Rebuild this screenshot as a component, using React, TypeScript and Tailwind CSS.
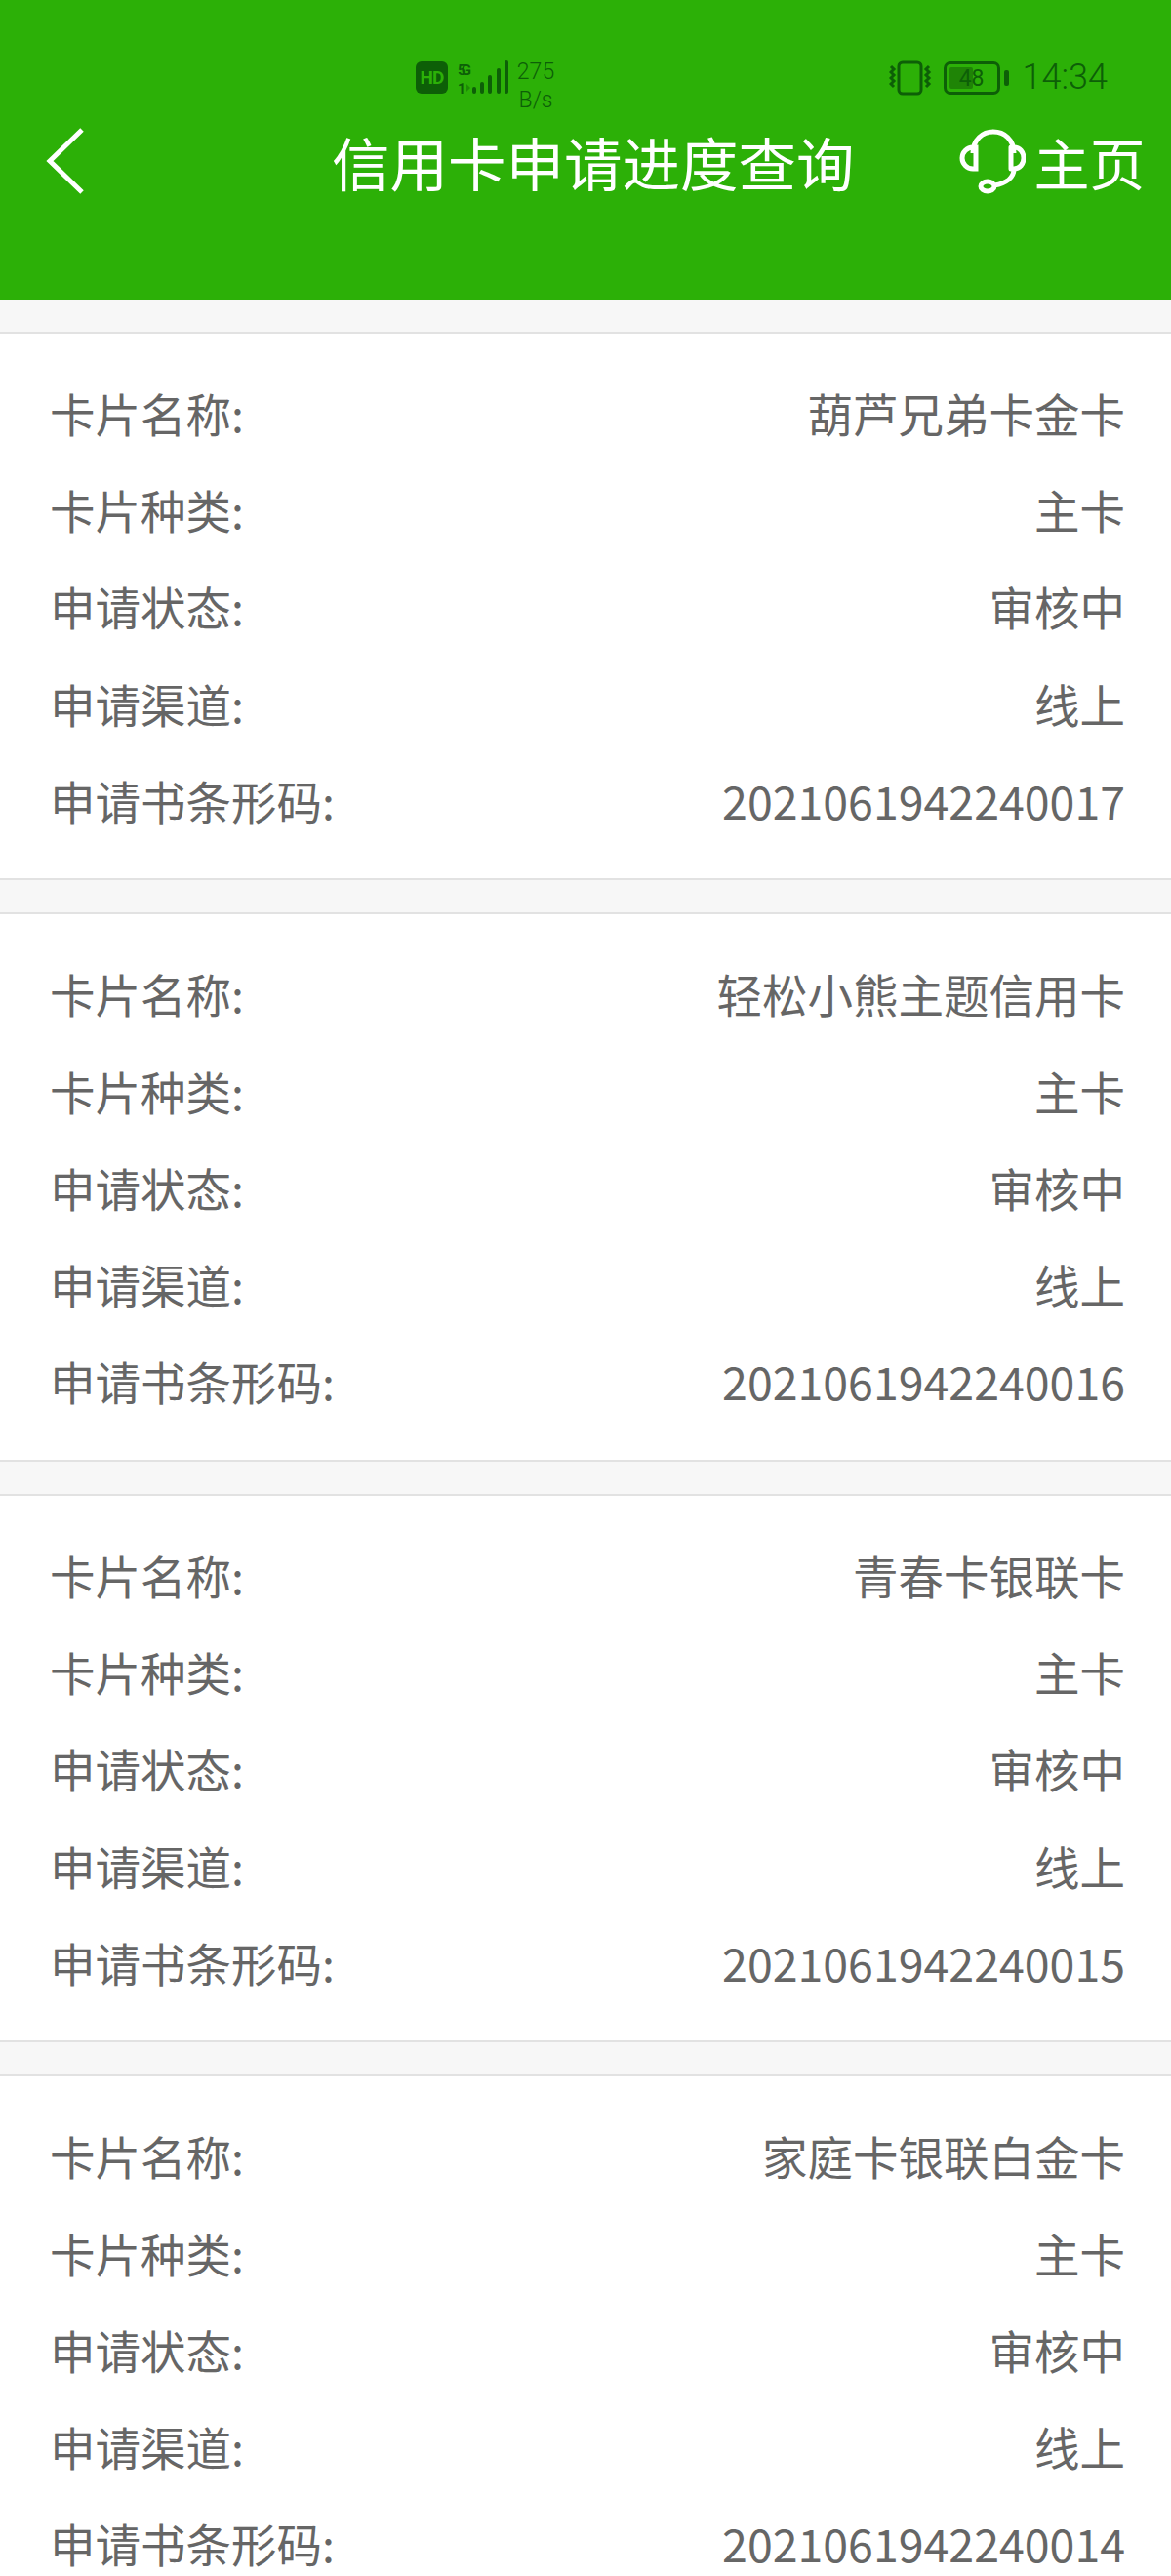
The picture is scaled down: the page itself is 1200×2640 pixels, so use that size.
const records = [
  { name: '葫芦兄弟卡金卡', code: '2021061942240017' },
  { name: '轻松小熊主题信用卡', code: '2021061942240016' },
  { name: '青春卡银联卡', code: '2021061942240015' },
  { name: '家庭卡银联白金卡', code: '2021061942240014' },
];

function StatusBar() {
  return (
    <div className="h-[120px] flex items-start pt-[62px] text-[#0d5f07]">
      <div className="w-[426px]" />
      {/* HD badge */}
      <div className="w-[33px] h-[33px] mt-[1px] rounded-[6px] bg-[#0d5f07] flex items-center justify-center text-[#2cb007] text-[19px] font-bold leading-none font-['Roboto',sans-serif] tracking-[-1px]">
        HD
      </div>
      {/* 5G signal */}
      <svg width="60" height="36" viewBox="0 0 60 36" className="ml-[10px]" fill="currentColor">
        <text x="0" y="15" fontSize="15" fontWeight="700" fontFamily="Roboto, sans-serif" textLength="14">5G</text>
        <text x="0" y="34" fontSize="14" fontWeight="700" fontFamily="Roboto, sans-serif">1</text>
        <path d="M9 24l4 4-4 4z" opacity="0.45" />
        <rect x="15" y="27" width="4" height="7" rx="2" />
        <rect x="23" y="22" width="4" height="12" rx="2" />
        <rect x="31" y="15" width="4" height="19" rx="2" />
        <rect x="40" y="8" width="4" height="26" rx="2" />
        <rect x="48" y="0" width="4" height="34" rx="2" />
      </svg>
      <div className="ml-[-2px] w-[44px] text-center text-[23px] leading-[29px] mt-[-3px] font-['Roboto',sans-serif] font-light">
        <div>275</div>
        <div>B/s</div>
      </div>
      <div className="flex-1" />
      {/* Vibrate */}
      <svg width="44" height="36" viewBox="0 0 44 36" fill="none" stroke="currentColor" strokeWidth="3">
        <rect x="10" y="2" width="23" height="32" rx="4" />
        <path d="M2 6l3 3-3 3 3 3-3 3 3 3-3 3 3 3" />
        <path d="M41 6l-3 3 3 3-3 3 3 3-3 3 3 3-3 3" />
      </svg>
      {/* Battery */}
      <div className="ml-[12px] flex items-center h-[36px]">
        <div className="relative w-[58px] h-[34px] border-[3px] border-[#0d5f07] rounded-[7px] p-[3px]">
          <div className="h-full w-[24px] rounded-[2px] bg-[#1f8406]" />
          <div className="absolute inset-0 flex items-center justify-center text-[23px] leading-none font-['Roboto',sans-serif]">48</div>
        </div>
        <div className="ml-[4px] w-[5px] h-[16px] rounded-[2px] bg-[#0d5f07]" />
      </div>
      <div className="ml-[14px] mr-[65px] mt-[-5px] text-[36px] leading-[44px] font-['Roboto',sans-serif] font-light">14:34</div>
    </div>
  );
}

function NavBar() {
  return (
    <div className="relative h-[187px] flex items-start justify-center text-white">
      <svg width="46" height="72" viewBox="0 0 46 72" className="absolute left-[44px] top-[67px]" fill="none" stroke="currentColor" strokeWidth="5">
        <path d="M39 3L6 36l33 33" />
      </svg>
      {/* The bar is 187 tall because the status row above stops at 120 */}
    </div>
  );
}

function Header() {
  return (
    <header className="bg-[#2cb007] h-[307px] overflow-hidden">
      <StatusBar />
      <div className="relative h-[187px] text-white">
        <div className="flex items-center h-[90px] pl-[44px]">
          <svg width="46" height="70" viewBox="0 0 46 70" fill="none" stroke="currentColor" strokeWidth="5">
            <path d="M40 3L7 35l33 32" />
          </svg>
          <div className="ml-[250px] text-[59.5px] leading-[90px] whitespace-nowrap">信用卡申请进度查询</div>
          <svg width="68" height="68" viewBox="0 0 68 68" className="ml-[107px]" fill="none" stroke="currentColor" strokeWidth="5">
            <path d="M14 26C14 12 24 4 35 4s21 8 21 22" />
            <path d="M14 20c-6 0-11 5-11 11s5 11 11 11h3V20z" />
            <path d="M53 20h3c6 0 10 5 10 11s-4 11-10 11h-3V20z" strokeLinejoin="round" />
            <path d="M56 42c0 9-8 15-20 17" />
            <ellipse cx="29" cy="60" rx="7" ry="5" />
          </svg>
          <div className="ml-[9px] text-[57px] leading-[90px] whitespace-nowrap">主页</div>
        </div>
      </div>
    </header>
  );
}

function Row({ label, value }: { label: string; value: string }) {
  return (
    <div className="h-[99.3px] flex items-center justify-between pl-[51px] pr-[47px]">
      <span className="text-[46.5px] text-[#666666]">{label}</span>
      <span className="text-[46.5px] text-[#666666]">{value}</span>
    </div>
  );
}

function RecordCard({ name, code }: { name: string; code: string }) {
  return (
    <section className="bg-white border-y-2 border-[#e2e2e2] pt-[31px] pb-[31px]">
      <Row label="卡片名称:" value={name} />
      <Row label="卡片种类:" value="主卡" />
      <Row label="申请状态:" value="审核中" />
      <Row label="申请渠道:" value="线上" />
      <Row label="申请书条形码:" value={code} />
    </section>
  );
}

export default function App() {
  return (
    <div className="w-[1200px] h-[2640px] overflow-hidden bg-[#f7f7f7] font-['Noto_Sans_CJK_SC','Noto_Sans',sans-serif]">
      <Header />
      <main className="pt-[33px] flex flex-col gap-[33px]">
        {records.map((r) => (
          <RecordCard key={r.code} name={r.name} code={r.code} />
        ))}
      </main>
    </div>
  );
}
